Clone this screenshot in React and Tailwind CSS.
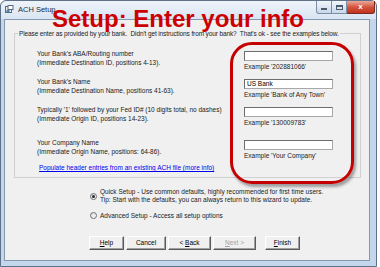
import React from "react";

const ui = { fontFamily: '"Liberation Sans", Arial, sans-serif' };

function Field({ value = "", example }) {
  return (
    <div className="flex flex-col">
      <div className="w-[89px] h-[10px] bg-white border border-[#a8a8a8] border-t-[#6d6d6d] border-l-[#6d6d6d] pl-[2px] leading-[8px] text-[6.5px] text-black">{value}</div>
      <div className="mt-[1px] leading-[9px] text-[6.5px] text-[#222]">{example}</div>
    </div>
  );
}

function Row({ title, sub, h, top, children }) {
  return (
    <div className={`flex ${h}`}>
      <div className="w-[207px] leading-[9px] text-[6.5px] text-[#1a1a1a]">
        <div>{title}</div>
        <div>{sub}</div>
      </div>
      <div className={top}>{children}</div>
    </div>
  );
}

function Radio({ checked }) {
  return (
    <div className="w-[7px] h-[7px] rounded-full border border-[#6f6f6f] bg-gradient-to-br from-[#d8d8d8] to-white flex items-center justify-center shrink-0">
      {checked && <div className="w-[3px] h-[3px] rounded-full bg-[#1f2a33]" />}
    </div>
  );
}

function Btn({ children, w, disabled, className = "" }) {
  return (
    <div className={`${w} h-[14px] bg-[#f0f0f0] border border-white border-r-[#5a5a5a] border-b-[#5a5a5a] shadow-[inset_-1px_-1px_0_#a0a0a0] flex items-center justify-center whitespace-pre text-[6.5px] ${disabled ? "text-[#a0a0a0]" : "text-black"} ${className}`}>
      {children}
    </div>
  );
}

export default function App() {
  return (
    <div className="w-[380px] h-[267px] bg-white relative overflow-hidden" style={ui}>
      <div className="w-[377px] h-[267px] bg-[#c3d6ec] border border-[#5f7189] rounded-t-[6px] flex flex-col">
        {/* title bar */}
        <div className="h-[18px] flex items-start bg-gradient-to-b from-[#eef3fa] to-[#d9e5f3] rounded-t-[6px]">
          <div className="flex items-center h-[17px] pl-[4px] gap-[4px]">
            <svg width="9" height="9" viewBox="0 0 9 9">
              <rect x="0.5" y="1.5" width="6" height="6" fill="#e8eef4" stroke="#5a6b7c" />
              <rect x="3" y="0.5" width="5" height="4" fill="#ffffff" stroke="#5a6b7c" />
              <rect x="1.5" y="5" width="3" height="2" fill="#4f7fb0" />
            </svg>
            <span className="text-[7.5px] text-[#1e2a36]">ACH Setup</span>
          </div>
          <div className="ml-auto mr-[1px] flex">
            <div className="w-[16px] h-[13px] border border-[#7b8ea6] border-t-0 rounded-bl-[3px] bg-gradient-to-b from-[#f2f6fb] to-[#c9d7e8] flex items-end justify-center pb-[3px]">
              <div className="w-[6px] h-[2px] bg-[#4a5a6c]" />
            </div>
            <div className="w-[15px] h-[13px] border-b border-r border-[#7b8ea6] bg-gradient-to-b from-[#f2f6fb] to-[#c9d7e8] flex items-center justify-center">
              <div className="w-[7px] h-[5px] border border-[#4a5a6c] border-t-2" />
            </div>
            <div className="w-[28px] h-[13px] border-b border-r border-[#7a2a20] rounded-br-[3px] bg-gradient-to-b from-[#e9a898] via-[#d3553f] to-[#c1311c] flex items-center justify-center">
              <span className="text-[8px] font-bold leading-none text-white">x</span>
            </div>
          </div>
        </div>

        {/* client area */}
        <div className="ml-[3px] mr-[6px] h-[242px] border border-[#8598b0] bg-[#f0f0f0] flex flex-col">
          <fieldset className="ml-[9px] w-[347px] mt-[9px] border border-[#d0d0d0] h-[149px]">
            <legend className="ml-[3px] px-[1px] leading-[9px] text-[6.5px] tracking-[-0.12px] text-[#1a1a1a]">
              Please enter as provided by your bank.&nbsp; Didn't get instructions from your bank?&nbsp; That's ok - see the examples below.
            </legend>
            <div className="pl-[22px] pt-[11px] flex flex-col">
              <Row h="h-[28px]" top="pt-[2px]" title="Your Bank's ABA/Routing number" sub="(Immediate Destination ID, positions 4-13).">
                <Field example="Example '202881066'" />
              </Row>
              <Row h="h-[28px]" top="pt-[1.5px]" title="Your Bank's Name" sub="(Immediate Destination Name, positions 41-63).">
                <Field value="US Bank" example="Example 'Bank of Any Town'" />
              </Row>
              <Row h="h-[33px]" top="pt-[1.5px]" title="Typically '1' followed by your Fed ID# (10 digits total, no dashes)" sub="(Immediate Origin ID, positions 14-23).">
                <Field example="Example '130009783'" />
              </Row>
              <Row h="h-[25px]" top="pt-[1.5px]" title="Your Company Name" sub="(Immediate Origin Name, positions: 64-86).">
                <Field example="Example 'Your Company'" />
              </Row>
              <div className="pl-[2px] leading-[9px] text-[6.5px] text-[#0000ee] underline">
                Populate header entries from an existing ACH file (more info)
              </div>
            </div>
          </fieldset>

          <div className="pl-[85px] mt-[10px] flex items-center gap-[3px]">
            <Radio checked />
            <div className="leading-[8px] text-[6.5px] text-[#1a1a1a]">
              <div>Quick Setup - Use common defaults, highly recommended for first time users.</div>
              <div>Tip: Start with the defaults, you can always return to this wizard to update.</div>
            </div>
          </div>
          <div className="pl-[85px] mt-[6.5px] flex items-center gap-[3px]">
            <Radio />
            <div className="leading-[9px] text-[6.5px] text-[#1a1a1a]">Advanced Setup - Access all setup options</div>
          </div>

          <div className="pl-[84px] mt-[16.5px] flex">
            <Btn w="w-[35px]"><span className="underline">H</span>elp</Btn>
            <Btn w="w-[40px]" className="ml-[2px]">Cancel</Btn>
            <Btn w="w-[43px]" className="ml-[2px]">{"< "}<span className="underline">B</span>ack</Btn>
            <Btn w="w-[43px]" className="ml-[2px]" disabled><span className="underline">N</span>{"ext >"}</Btn>
            <Btn w="w-[35px]" className="ml-[9px]"><span className="underline">F</span>inish</Btn>
          </div>
        </div>
      </div>

      {/* annotation overlays */}
      <div className="absolute left-[52px] top-[7px] text-[24px] leading-[24px] font-bold text-[#cc0000] whitespace-nowrap">
        Setup: Enter your info
      </div>
      <div className="absolute left-[230px] top-[42px] w-[124px] h-[142px] border-[3px] border-[#c40000] rounded-[22px] shadow-[2px_3px_3px_rgba(0,0,0,0.35)]" />
    </div>
  );
}
